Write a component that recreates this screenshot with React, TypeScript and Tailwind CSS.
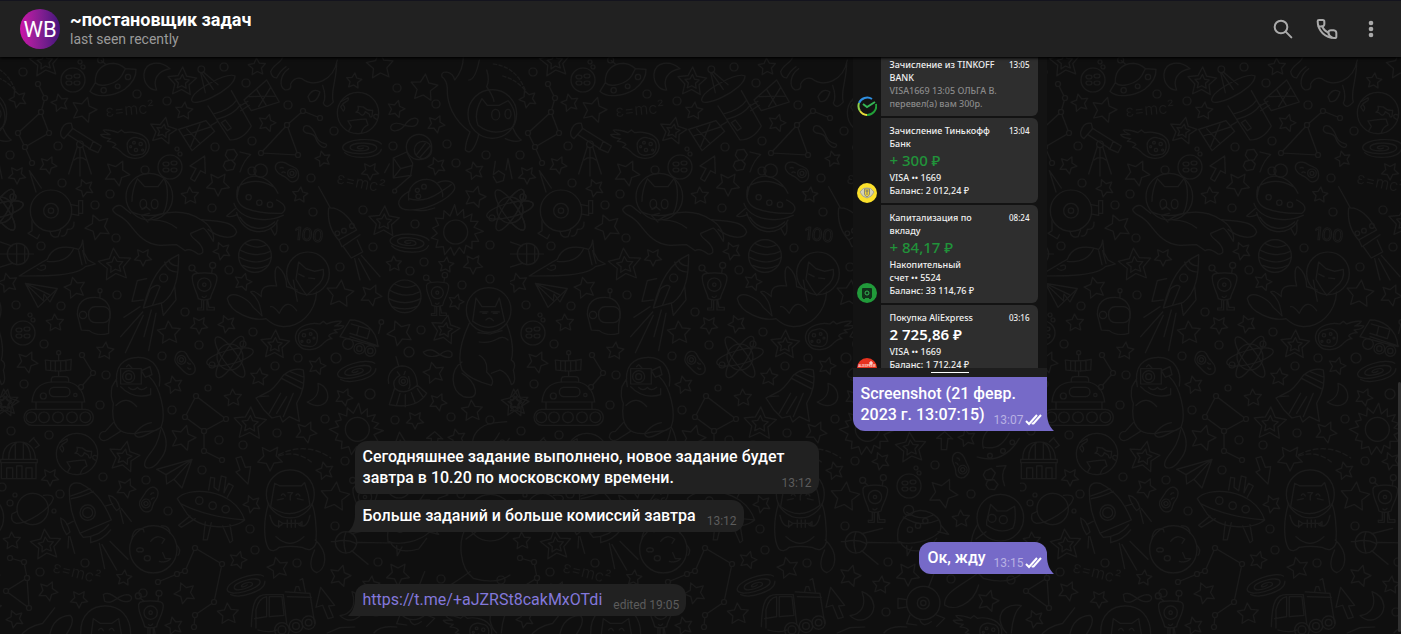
import type { ReactNode } from 'react';

type Point = [number, number, number];

// x, y, radius
const stars: Point[] = [
  [18, 99, 9], [60, 103, 9], [257, 67, 9], [184, 111, 9], [267, 123, 9], [48, 165, 9], [17, 175, 9], [85, 188, 9],
  [323, 159, 8], [190, 196, 9], [300, 195, 8], [84, 110, 13], [117, 173, 13], [218, 184, 12], [98, 227, 13],
  [75, 288, 11], [169, 333, 12], [340, 294, 14], [183, 438, 13], [306, 432, 11], [270, 458, 13], [185, 593, 11],
  [278, 568, 11], [228, 614, 11], [335, 497, 15], [340, 576, 11], [126, 488, 10], [143, 257, 9], [222, 251, 9],
  [8, 283, 10], [55, 323, 9], [105, 351, 9], [243, 282, 9], [27, 362, 11], [199, 325, 9], [227, 324, 9],
  [174, 385, 9], [233, 398, 9], [259, 377, 9], [317, 366, 9], [344, 397, 9], [50, 477, 9], [252, 504, 9],
  [325, 471, 9], [12, 541, 9], [124, 578, 8], [238, 560, 9], [48, 591, 10], [79, 599, 9], [15, 619, 9],
  [174, 626, 9], [380, 66, 14], [424, 88, 14], [475, 197, 11], [371, 295, 11], [473, 264, 10], [400, 333, 13],
  [434, 373, 11], [472, 411, 11], [354, 81, 8], [396, 109, 9], [436, 124, 9], [370, 171, 9], [437, 166, 9],
  [475, 171, 9], [394, 264, 8], [446, 265, 8], [456, 302, 8], [438, 402, 9], [415, 420, 9], [371, 461, 9],
  [457, 438, 9], [451, 519, 9], [371, 585, 9], [478, 601, 11], [433, 493, 15], [398, 574, 12],
];

const doubleStars: Point[] = [
  [45, 62, 16], [182, 82, 15], [163, 131, 14], [115, 265, 17], [275, 345, 15], [5, 403, 14], [515, 403, 14],
  [250, 424, 17], [124, 457, 16], [46, 545, 16], [384, 222, 16], [445, 330, 15], [401, 448, 16],
];

const dots: Point[] = [
  [23, 72, 4], [137, 94, 4], [167, 101, 4], [224, 67, 4], [246, 83, 4], [58, 146, 4], [10, 155, 4], [215, 147, 4],
  [288, 105, 4], [334, 131, 4], [252, 171, 4], [252, 141, 4], [145, 170, 4], [311, 178, 4], [62, 183, 4],
  [110, 194, 4], [95, 205, 4], [116, 238, 4], [41, 246, 4], [212, 208, 4], [313, 212, 4], [284, 248, 4],
  [340, 267, 4], [229, 270, 4], [117, 295, 4], [16, 305, 4], [61, 306, 4], [185, 312, 4], [44, 344, 4],
  [199, 345, 4], [253, 332, 4], [162, 356, 4], [298, 358, 4], [336, 358, 5], [275, 366, 4], [106, 375, 4],
  [24, 384, 4], [208, 388, 3], [100, 405, 4], [172, 410, 4], [11, 431, 4], [49, 435, 4], [277, 433, 4],
  [219, 440, 4], [243, 445, 4], [325, 419, 4], [345, 461, 4], [103, 477, 4], [146, 480, 4], [202, 470, 4],
  [2, 487, 4], [60, 494, 4], [10, 503, 3], [15, 495, 2], [54, 511, 2], [168, 511, 4], [250, 529, 4],
  [335, 526, 4], [255, 550, 4], [297, 563, 4], [85, 563, 4], [40, 572, 4], [143, 593, 4], [397, 88, 4],
  [436, 104, 4], [393, 146, 4], [447, 144, 4], [456, 163, 4], [486, 155, 4], [363, 210, 4], [415, 224, 4],
  [373, 247, 4], [424, 262, 4], [410, 271, 4], [462, 285, 4], [490, 245, 4], [490, 279, 4], [421, 330, 4],
  [409, 352, 5], [370, 394, 5], [395, 420, 4], [451, 417, 4], [490, 420, 4], [425, 465, 4], [461, 494, 4],
  [378, 562, 4], [441, 579, 4], [501, 580, 4], [376, 612, 4],
];

// joints of each constellation
const constellations: [number, number][][] = [
  [[38, 84], [45, 98], [41, 112], [49, 133], [25, 147], [18, 133], [41, 112]],
  [[25, 147], [32, 163]],
  [[320, 118], [303, 111], [287, 125], [261, 153], [298, 155], [287, 125]],
  [[82, 355], [93, 373], [81, 387]],
  [[222, 460], [204, 451], [204, 431], [185, 417], [196, 396], [226, 419], [204, 431]],
  [[158, 582], [177, 574], [185, 571], [195, 548], [222, 564], [214, 602], [195, 615], [194, 627]],
  [[10, 558], [24, 562], [27, 578], [6, 591], [29, 608], [27, 578]],
];

function starPath([cx, cy, r]: Point, turn: number) {
  const points = Array.from({ length: 10 }, (_, i) => {
    const radius = i % 2 ? r * 0.5 : r;
    const angle = turn + (i * Math.PI) / 5;
    return `${(cx + radius * Math.sin(angle)).toFixed(1)} ${(cy - radius * Math.cos(angle)).toFixed(1)}`;
  });
  return `M${points.join('L')}Z`;
}

function Atom({ x, y }: { x: number; y: number }) {
  return (
    <g transform={`translate(${x} ${y})`}>
      <circle r="13" />
      <ellipse rx="24" ry="7" transform="rotate(-15)" />
      <ellipse rx="24" ry="7" transform="rotate(55)" />
      <ellipse rx="24" ry="7" transform="rotate(122)" />
      <circle cx="-18" cy="8" r="3" />
      <circle cx="13" cy="-13" r="3" />
    </g>
  );
}

function Comet({ transform }: { transform: string }) {
  return (
    <g transform={transform}>
      <path d="M100 10C90 -8 60 -20 30 -14L20 -22 10 -14C-5 -20 -20 -24 -34 -22 -30 -14 -22 -12 -14 -8 -26 -8 -34 -10 -42 -8 -34 4 -22 2 -12 4L-22 12C-8 12 0 16 4 22L-6 30C10 30 14 40 26 50 44 66 76 68 92 52 104 40 106 24 100 10Z" />
      <path d="M38 30C34 8 54 -4 70 2L84 6C100 16 96 42 84 50L60 54C46 54 38 44 38 30Z" />
      <circle cx="58" cy="16" r="4" /><circle cx="78" cy="20" r="5" /><circle cx="64" cy="38" r="5" /><circle cx="48" cy="28" r="3" /><circle cx="84" cy="38" r="3" />
    </g>
  );
}

function Alien({ transform }: { transform: string }) {
  return (
    <g transform={transform}>
      <path d="M-36 -24Q-34 -32 -26 -33Q0 -38 26 -33Q36 -32 38 -22C38 4 22 20 18 42Q0 50 -18 42C-22 20 -38 2 -36 -24Z" />
      <circle r="20" /><circle r="5" />
      <path d="M-20 -34L-32 -44M22 -34L24 -50M-6 36Q0 42 6 34M-8 46V70H-20V76H-2V48M10 46L14 68H30V76H8V48" />
      <circle cx="-37" cy="-50" r="9" /><circle cx="25" cy="-58" r="9" />
    </g>
  );
}

function Galaxy({ transform }: { transform: string }) {
  return (
    <path
      transform={transform}
      d="M58 -12C40 -34 -54 -28 -58 -2C-60 22 42 24 44 0C44 -18 -34 -20 -36 -2C-36 12 22 12 20 0C18 -10 -16 -8 -14 0Q-6 5 4 0M-52 14C-30 34 50 34 58 4"
    />
  );
}

function MoonDisc({ x, y }: { x: number; y: number }) {
  return (
    <g transform={`translate(${x} ${y})`}>
      <circle r="12" />
      <ellipse cx="-4" cy="-3" rx="3" ry="2" /><ellipse cx="4" cy="-4" rx="3" ry="2" />
      <ellipse cx="-4" cy="3" rx="3" ry="2" /><ellipse cx="4" cy="3" rx="3" ry="2" />
      <circle cx="10" cy="-13" r="2" /><circle cx="7" cy="-18" r="2" />
    </g>
  );
}

function Earth({ x, y }: { x: number; y: number }) {
  return (
    <g transform={`translate(${x} ${y}) scale(.3333)`} strokeWidth="3.6">
      <circle r="62" />
      <path d="M-52 -34L-30 -46Q-26 -38 -36 -34T-52 -18L-44 -6Q-36 -14 -44 -24M-6 -2Q4 -8 0 -20L16 -18Q28 -6 44 -8L42 10Q36 16 34 4L22 -4Q16 12 8 4T-6 -2ZM-30 24L0 20 24 18 30 36Q14 42 10 60M-30 24L-20 40-28 54M60 6Q44 0 48 14L58 20" />
    </g>
  );
}

function Bean({ transform }: { transform: string }) {
  return (
    <g transform={transform}>
      <path d="M-34 -22C-26 -36 -6 -28 4 -22C18 -14 34 -14 34 8C34 28 16 34 6 26C0 20 -4 14 -16 10C-30 4 -40 -10 -34 -22Z" />
      <circle cx="14" cy="4" r="13" /><circle cx="14" cy="4" r="6" />
      <path d="M-22 -12q6 -4 10 0M-16 2q4 -4 10 0" />
    </g>
  );
}

function Formula({ transform }: { transform: string }) {
  return (
    <text transform={transform} className="text-base [font-family:Inter,sans-serif]" fontWeight="300" stroke="none" fill="#1b1b1b">
      ε=mc²
    </text>
  );
}

// Space doodles, grouped by area. Most groups are drawn on a grid of a third of a pixel.
function Doodles() {
  return (
    <g id="doodles" fill="none" stroke="#1b1b1b" strokeWidth="1.2" strokeLinecap="round" strokeLinejoin="round">
      {stars.map((s, i) => (
        <path key={i} d={starPath(s, (i % 7) * 0.17 - 0.4)} />
      ))}
      {doubleStars.map((s, i) => (
        <path key={i} d={starPath(s, (i % 3) * 0.15 - 0.1) + starPath([s[0], s[1], s[2] / 2], (i % 3) * 0.15 - 0.1)} />
      ))}
      {dots.map(([cx, cy, r]) => (
        <circle key={`${cx}-${cy}`} cx={cx} cy={cy} r={r} />
      ))}
      {constellations.map((line, i) => (
        <g key={i}>
          <path d={`M${line.map((p) => p.join(' ')).join('L')}`} />
          {line.map(([cx, cy], j) => (
            <circle key={j} cx={cx} cy={cy} r="2.5" fill="#0f0f0f" />
          ))}
        </g>
      ))}
      <MoonDisc x={73} y={80} />
      <MoonDisc x={170} y={167} />
      <MoonDisc x={23} y={333} />
      <MoonDisc x={399} y={486} />
      <Atom x={0} y={210} />
      <Atom x={510} y={210} />
      <Atom x={230} y={357} />
      <Earth x={358} y={113} />
      <Earth x={-152} y={113} />
      <Earth x={77} y={454} />
      <Formula transform="translate(106 117) rotate(-5)" />
      <Formula transform="translate(336 183) rotate(12)" />
      <Formula transform="translate(52 572) rotate(14)" />
      <g strokeWidth="3.6">
        <g transform="scale(.3333)">
          {/* saucer, crescent and dish */}
          <path d="M286 248C284 210 310 190 340 190Q362 192 376 206L408 208Q410 240 374 268C340 290 290 294 270 274L286 248C300 264 350 254 366 226L376 206M316 192L304 182" />
          <circle cx="302" cy="180" r="9" /><circle cx="311" cy="271" r="8" /><circle cx="353" cy="259" r="7" /><circle cx="384" cy="231" r="8" />
          <path d="M510 206C480 180 436 184 432 222C430 250 450 272 470 270C458 240 470 214 510 206Z" />
          <path d="M575 298C570 330 706 270 705 228C680 216 580 270 575 298ZM602 218L616 278M610 216L654 254M606 220L640 268M624 318L690 420Q730 420 754 378L694 272M640 342Q690 330 710 300M650 358Q700 346 722 314M664 368L676 360 694 384 682 392ZM716 320L744 304M722 332L748 316M732 300L800 240 838 306 754 332ZM748 290L828 288M770 268L800 318M776 320L812 262M654 364L634 376M536 388L618 362 644 394 576 452ZM550 408L634 380M560 386L600 430M600 372L572 440" />
          <circle cx="604" cy="208" r="10" />
          {/* cat hanging from the top */}
          <path d="M850 160C850 190 820 190 812 216Q816 234 830 234Q842 210 858 200M866 206C840 224 836 260 856 270Q876 270 872 252Q884 230 906 236C940 262 1000 246 1012 180M924 290Q938 262 960 276Q950 310 930 304ZM1010 190C1010 240 990 280 1000 306Q980 330 970 310Q980 290 968 256" />
          {/* telescope */}
          <path d="M182 396Q190 366 214 370L218 386 192 416Q180 410 182 396ZM216 384L280 424 270 446 204 404M280 424L304 438 294 458 266 446M232 440L206 522M240 444V528M248 440L274 522M222 480Q240 466 258 480" />
          <circle cx="240" cy="433" r="10" />
          {/* infinity, arrow and cells */}
          <path d="M912 380C930 366 946 400 950 412C960 436 980 426 980 436C976 450 956 440 946 412C936 392 916 408 910 390ZM570 498L614 468 616 520 602 512 584 544 572 536 588 506ZM682 450L702 448 712 464 702 480 686 480 676 466ZM676 484L694 480 706 492 700 508 680 512 670 498ZM720 456L752 464Q732 480 720 516" />
          <Comet transform="translate(344 412)" />
          <Bean transform="translate(862 516)" />
        </g>

        <g transform="translate(0 200) scale(.3333)">
          {/* round station */}
          <circle cx="153" cy="32" r="62" /><circle cx="153" cy="32" r="22" /><circle cx="153" cy="32" r="8" />
          <path d="M88 -88L124 -36M88 -88L108 -24M214 14L236 18V46L214 42M236 2H248V40H236ZM96 62V92L84 100 112 116 118 104M150 94Q154 116 174 110L182 90M184 108Q200 110 202 88M202 88Q224 90 222 66" />
          {/* flying cat */}
          <circle cx="448" cy="-10" r="70" />
          <path d="M396 4Q396 -30 412 -64L434 -40H474L492 -64C506 -40 506 10 490 40Q440 56 396 36M448 40L424 46 444 66M426 28L438 20 450 30M392 40L368 20Q352 10 338 28C340 44 360 44 376 60C400 80 420 132 480 136L530 134 556 152Q568 142 594 162Q612 164 608 148C600 120 570 116 572 100L610 84Q620 90 640 124C644 110 636 76 600 58C560 30 520 36 502 38Q470 44 446 60M600 58C650 66 700 60 710 96C700 124 650 110 624 88M460 60Q500 60 530 84" />
          <ellipse cx="430" cy="12" rx="10" ry="14" /><ellipse cx="464" cy="12" rx="10" ry="14" />
          {/* beanie saucer */}
          <path d="M702 10C720 60 800 70 850 46M714 -40Q700 10 740 26T846 40Q870 20 830 0M712 -10C716 -90 800 -90 834 -20M720 -44Q770 -70 820 -40M710 38C730 110 810 110 834 60M720 52C744 90 790 96 824 66M706 26L680 48Q690 54 712 44M812 84L824 106Q834 100 830 66" />
          <circle cx="782" cy="-88" r="20" /><circle cx="746" cy="-8" r="8" /><circle cx="778" cy="8" r="8" /><circle cx="810" cy="14" r="8" />
          {/* probe */}
          <circle cx="54" cy="162" r="32" />
          <path d="M50 130V194M74 140V186M-68 162H100M-46 110L36 138M-46 216L36 190" />
          {/* shuttle lying */}
          <path d="M58 228Q120 190 142 178C160 130 210 140 236 148Q246 138 248 120L252 158L264 180 286 192 256 200C230 228 140 228 58 228ZM142 184Q200 190 220 148M236 152L246 194M248 152L258 190M122 198Q140 190 136 206Q124 216 112 206" />
          {/* rocket */}
          <path d="M536 164C480 190 450 240 430 324L488 308C530 280 536 220 536 164ZM494 186Q500 214 530 216M506 180Q510 196 534 198M440 236L412 242 396 304 430 300M524 258L528 300 490 346 484 310M430 324L450 268Q470 250 480 260L458 314M420 320L372 352M428 336L362 410M430 346L376 458M454 330L432 410M468 340L446 452" />
          <circle cx="491" cy="234" r="12" />
          <Alien transform="translate(613 254)" />
          {/* striped planet */}
          <circle cx="765" cy="168" r="49" />
          <path d="M734 130Q770 150 800 134M720 150Q770 176 812 154M718 172Q770 200 814 172M728 196Q770 214 804 196" />
          {/* sleeping cat in a helmet */}
          <circle cx="924" cy="220" r="64" />
          <path d="M888 238L896 186 918 206 944 214 970 208Q976 240 946 262L920 286Q900 260 888 238ZM880 240L892 304M950 276C946 340 900 380 850 380Q820 378 798 356C760 364 690 340 682 296C690 270 740 290 760 322Q780 340 786 348C780 320 780 300 752 276Q760 268 784 290Q780 250 830 258C824 240 822 200 834 200Q860 220 860 260L892 270M812 320Q820 316 838 340Q860 290 890 332M896 222L912 230M926 234L944 236" />
          <text x="884" y="122" fontSize="52" className="[font-family:Inter,sans-serif]" strokeWidth="3" transform="rotate(6 920 100)">100</text>
          {/* capsule rocket */}
          <path d="M956 -40L990 22M986 24Q1030 20 1070 90L1016 120Q980 80 986 24ZM1016 118L1026 140 1080 104M1030 140L1054 174 1088 156 1072 120M1064 176L1080 240M1076 176L1110 240M1084 166L1140 230" />
          <circle cx="1012" cy="100" r="7" /><circle cx="1032" cy="92" r="7" /><circle cx="1056" cy="78" r="7" />
          {/* paper planes */}
          <path d="M76 250L172 266 114 322ZM76 250L130 302 132 282 150 306 172 266M76 250L148 284M470 808L576 778 546 864 522 838 500 852 498 824ZM498 824L576 778 522 838" />
          {/* helmet */}
          <path d="M232 344C232 300 260 292 284 292C320 292 334 320 330 352L326 376V400Q290 410 268 392L244 390ZM300 292V278" />
          <rect x="266" y="320" width="64" height="48" rx="20" /><circle cx="300" cy="272" r="6" /><circle cx="249" cy="345" r="11" />
          <Comet transform="matrix(-1 0 0 1 990 386)" />
          <Bean transform="translate(556 488) rotate(200)" />
          {/* rover on tracks */}
          <path d="M96 606C100 560 130 546 160 546H196C230 546 250 570 254 606ZM108 606V628M246 606V628M154 546V536Q156 530 164 530H196Q206 530 206 540V546M176 530V514M136 480Q176 486 214 478L212 510Q176 516 138 510ZM152 482V512M166 484V514M182 484V514M198 482V512M176 480V464" />
          <rect x="72" y="628" width="208" height="48" rx="24" /><rect x="148" y="562" width="62" height="28" rx="14" />
          <circle cx="94" cy="652" r="16" /><circle cx="132" cy="652" r="16" /><circle cx="174" cy="652" r="16" /><circle cx="216" cy="652" r="16" /><circle cx="256" cy="652" r="16" />
          <circle cx="176" cy="458" r="6" /><circle cx="130" cy="588" r="9" /><circle cx="226" cy="585" r="5" />
          {/* cat taking a photo */}
          <path d="M352 560C340 500 370 472 416 472C460 472 486 510 478 558M362 506H424V552H362ZM424 512L450 500 456 524 436 532ZM380 500L386 494 396 504M362 560Q400 600 452 584V566M386 562Q400 576 412 562Q424 576 440 562M448 530C480 560 500 640 484 680C470 700 440 690 410 700C360 706 330 680 340 610Q330 590 336 560L350 536M348 616Q380 584 410 620M340 668L316 694Q298 694 298 712Q306 728 324 718L362 694M404 702Q410 720 440 704L484 682Q516 740 478 782C460 810 430 810 434 790C440 760 470 756 482 690M404 700Q430 670 454 668" />
          <circle cx="386" cy="530" r="18" /><circle cx="386" cy="530" r="9" />
          {/* space shuttle */}
          <path d="M850 526Q880 500 910 510C916 540 914 570 890 610L898 664 868 650 848 666 840 648 816 654 792 630 768 594 800 578Q820 570 850 526ZM846 536L904 566M856 524L910 550M868 514L912 532M842 580L808 640M880 580L850 650M860 590L830 640M776 590L806 588" />
          <path d="M954 550C960 584 940 600 922 606C960 630 990 610 982 578Q976 556 954 550Z" />
          {/* observatory */}
          <path d="M8 778C8 740 30 726 60 726C90 726 106 750 106 778M2 778H112V788H2ZM4 790V836H108V790M26 776Q26 740 50 728M46 776V728M70 776V728M92 776Q92 740 70 728M20 834V804H38V834M50 834V798H66V834M78 834V804H96V834M88 726L100 714 118 736 106 744M94 720L102 712" />
          {/* ringed planet */}
          <circle cx="98" cy="927" r="47" />
          <path d="M130 886Q160 882 160 896C150 930 80 970 50 970Q30 966 36 942L52 934" />
          {/* big rocket */}
          <path d="M208 870Q210 844 240 850C280 870 310 900 334 960L240 1000C220 960 206 920 208 870ZM212 888Q240 880 270 866M214 896Q250 890 280 874M240 1000L250 1012Q300 1010 326 974M272 1012V1028Q310 1020 332 990M316 918L338 912M220 964L200 974M326 886Q350 890 360 924L350 932Q334 914 326 886ZM182 954Q200 960 210 996L200 1004Q184 980 182 954ZM298 1030L314 1106M306 1034L350 1110M330 1024L384 1078M206 1010L204 1044M210 1010L224 1060M360 930L370 970M364 926L394 964" />
          <circle cx="263" cy="938" r="23" /><circle cx="263" cy="938" r="15" />
          <Bean transform="translate(448 900) rotate(150) scale(1 -1)" />
          {/* moon with craters */}
          <circle cx="460" cy="1048" r="71" />
          <ellipse cx="420" cy="1050" rx="10" ry="6" /><ellipse cx="442" cy="1075" rx="9" ry="8" />
          <path d="M396 1016Q400 980 430 988L432 996M484 978Q508 976 510 1000M530 1036Q546 1050 534 1066M452 1024Q470 1000 494 1018L486 1030M488 1058L496 1076H512Q500 1090 478 1084" />
          {/* saucer with legs */}
          <path d="M532 896C560 860 700 860 734 960C700 990 600 990 560 940ZM544 912Q620 950 732 960M626 870L632 832 644 834 642 862 656 872 664 828 678 832 672 878 686 850 700 858 682 892M570 948L536 976 544 982 586 956M616 966L610 1020H622L634 968M668 978L690 1028 698 1022 690 974" />
          <circle cx="598" cy="902" r="11" /><circle cx="638" cy="917" r="11" /><circle cx="677" cy="928" r="11" />
          {/* arrow and falling star trail */}
          <path d="M708 774L724 770 736 802 752 800 744 852 708 816 720 810Z" />
          <path d="M836 764Q920 724 992 774M836 768Q890 750 934 786" strokeDasharray="14 9" />
          {/* cat holding a fish */}
          <circle cx="871" cy="882" r="72" />
          <path d="M812 920L824 850 840 858H904L914 848Q926 880 930 916Q870 964 812 920ZM806 910C790 960 790 1020 806 1046Q820 1060 838 1042Q870 1036 906 1042Q936 1060 948 1030C952 980 944 930 936 912M810 946Q820 990 846 974M930 946Q920 990 896 974M836 962V982L848 970ZM848 970H900M862 960V982M874 960V982M886 960V982M900 970L906 964V978ZM828 1010Q870 1050 912 1010M946 1020C990 1060 976 1110 950 1118C926 1110 930 1080 944 1050M844 886Q850 876 856 888M888 886Q894 876 900 888M864 878H878L871 886V900M832 900L850 896M892 896L910 900" />
          <Galaxy transform="translate(738 1156) rotate(-16)" />
          {/* truck */}
          <path d="M754 1280C756 1200 770 1184 800 1184H850L860 1270M768 1284V1230Q776 1194 800 1190V1250L764 1256M808 1190H846L852 1246 808 1250ZM856 1176L930 1180 944 1270M862 1190L934 1192M884 1176L888 1160H896L900 1172M900 1140L908 1136 916 1176M774 1290Q810 1300 830 1290" />
          <circle cx="846" cy="1290" r="22" /><circle cx="888" cy="1278" r="20" /><circle cx="926" cy="1268" r="20" /><circle cx="846" cy="1290" r="12" /><circle cx="888" cy="1278" r="10" /><circle cx="926" cy="1268" r="10" />
          <path d="M962 1162L1004 1216 986 1218 1000 1252 984 1256 968 1216 948 1222ZM310 1184C330 1170 350 1200 370 1204C400 1210 402 1184 380 1184C350 1186 340 1216 314 1204Z" />
          {/* helmet cat at the bottom */}
          <path d="M242 1302C240 1240 280 1218 316 1218C360 1218 392 1250 392 1302M274 1302L280 1256 300 1270H336L356 1256 364 1302M296 1290Q304 1280 310 1292M328 1290Q336 1280 342 1292" />
          <Alien transform="translate(452 1238)" />
          <path d="M164 1224L128 1270Q80 1280 60 1310M150 1302Q160 1250 210 1246Q228 1260 200 1302" />
        </g>

        <g transform="translate(350 60) scale(.3333)">
          {/* cat upside down */}
          <circle cx="427" cy="162" r="73" />
          <path d="M384 196Q370 160 396 116L412 136H448L474 122C500 150 500 190 484 204Q430 232 384 196ZM360 216C310 180 290 130 292 84Q290 60 276 50Q272 36 290 36Q310 40 314 60Q340 30 340 -10M356 60Q376 60 388 0M410 30Q420 60 410 80Q430 110 432 124M360 216Q346 250 346 270Q360 284 372 262Q384 240 386 222M466 236Q500 250 514 240Q500 230 490 206" />
          <ellipse cx="437" cy="164" rx="12" ry="16" /><ellipse cx="474" cy="162" rx="9" ry="14" />
          <path d="M430 12Q500 20 528 96M458 48Q500 60 524 90" strokeDasharray="10 7" />
          <path d="M122 200C130 184 150 190 164 196C180 170 206 170 204 184C200 204 180 200 164 196C150 214 120 220 122 200ZM220 876C250 860 260 880 270 884C300 900 308 890 306 880C300 866 280 874 270 884C250 894 226 890 220 876Z" />
          <Galaxy transform="translate(36 264)" />
          <Galaxy transform="translate(178 548) rotate(5)" />
          <Galaxy transform="translate(20 934) rotate(-12)" />
          {/* lander */}
          <circle cx="207" cy="261" r="38" /><circle cx="219" cy="270" r="26" />
          <path d="M200 284L226 250M210 292L240 258M170 276L130 294V354L182 346 188 310 170 276M130 294L152 326 130 354M152 326L188 316M184 346L136 388M118 312L104 338" />
          <circle cx="134" cy="393" r="6" />
          {/* planet with ring */}
          <path d="M176 420C170 380 200 358 230 358C260 358 280 390 278 410M180 392C130 420 140 450 180 450C250 450 320 400 314 380C310 360 280 360 264 368M176 416Q220 430 268 398T300 376M190 450Q220 456 254 444" />
          <circle cx="222" cy="380" r="7" /><circle cx="202" cy="391" r="6" /><circle cx="205" cy="409" r="7" />
          <path d="M436 304L430 344 446 332 464 344 460 362 440 368 430 350M474 296L468 330M474 296L486 356" />
          {/* sun */}
          <circle cx="317" cy="516" r="36" />
          <path d="M314 434L322 466 340 448 342 474 366 462 362 484 384 484 372 502 400 514 374 522 386 544 366 544 366 566 348 556 342 580 328 562 312 586 302 562 284 584 280 560 258 562 264 540 244 534 262 520 248 504 266 496 256 474 280 476 282 452 300 468Z" />
          <circle cx="164" cy="709" r="49" />
          <path d="M134 672Q170 690 196 676M118 690Q166 718 208 696M116 716Q166 740 212 716M126 740Q166 754 200 740" />
          <Alien transform="translate(262 698) scale(.9)" />
          {/* grumpy cat */}
          <circle cx="416" cy="750" r="67" />
          <path d="M368 784L378 714 396 740H436L448 714 464 784Q416 820 368 784ZM358 790C330 850 324 900 336 930Q360 960 424 976Q436 960 410 936Q414 900 388 886M470 792C490 840 490 880 484 900Q500 910 490 930Q500 970 484 974Q476 940 450 930L424 940M336 906C300 930 300 990 340 1010Q380 1020 376 990Q370 960 336 940M384 818L420 822 456 812M388 846Q420 850 440 838T474 840M390 756H414M424 756H448M398 760h12M430 760h12M408 780Q418 768 430 782" />
          {/* moon rover */}
          <path d="M0 780C30 780 80 800 84 860L-30 830ZM0 830L86 858M4 792L60 808 52 836 0 820M26 800L20 826M86 820L92 794" />
          <circle cx="94" cy="786" r="7" /><circle cx="28" cy="866" r="16" /><circle cx="61" cy="873" r="16" /><circle cx="28" cy="866" r="8" /><circle cx="61" cy="873" r="8" /><circle cx="-6" cy="852" r="16" />
          {/* little alien in a capsule */}
          <path d="M116 970C110 940 130 920 156 918C190 918 200 950 202 974M146 918L138 890M134 984Q160 1010 202 976L230 1000Q200 1050 118 1034L134 984M150 1000L140 1034M166 1004V1040M184 998L196 1030M202 986L220 1012M134 984Q124 960 150 946L142 936M162 944L166 934M176 950Q184 980 176 986" />
          <circle cx="160" cy="964" r="13" /><circle cx="160" cy="964" r="6" />
          {/* sun at the bottom */}
          <circle cx="22" cy="1108" r="36" />
          <path d="M-62 1108L-34 1100-44 1084-26 1080-34 1060-10 1068-8 1044 10 1060 26 1030 34 1062 52 1046 52 1070 76 1064 66 1084 86 1090 72 1104 100 1112 72 1124 84 1144 60 1144 60 1166 42 1156 34 1180 20 1160 4 1184-4 1160-26 1166-24 1144-44 1140-36 1122Z" />
        </g>

        <g transform="translate(180 425) scale(.3333)">
          <path d="M764 20L788 42 774 40 770 74H754V40L740 40Z" />
          <path d="M880 70C870 30 900 0 940 -6L980 -10M862 96Q940 120 988 40M880 66Q930 80 958 24" />
          <circle cx="900" cy="92" r="7" /><circle cx="939" cy="78" r="7" /><circle cx="967" cy="52" r="7" />
          <Bean transform="translate(810 122) rotate(40)" />
          <path d="M886 138L904 130 916 144 906 164 888 164 880 150ZM892 168L912 164 924 178 914 194 896 192 888 180ZM920 124L948 122Q930 150 944 182" />
          <Alien transform="translate(555 216)" />
          {/* probe and beanie saucer */}
          <circle cx="498" cy="352" r="32" />
          <path d="M466 350Q498 340 530 356M498 320Q486 350 498 384M454 350H466M516 326L578 310M530 352L636 354M516 378L564 418M624 350C616 290 650 262 690 256C740 260 760 290 750 320C720 350 660 362 624 350ZM650 262Q690 290 730 270M640 276Q690 310 744 286M630 350Q650 390 716 372L740 340M752 300L776 328 744 320M650 362L652 392 666 366" />
          <circle cx="656" cy="256" r="15" /><circle cx="660" cy="314" r="8" /><circle cx="684" cy="302" r="8" /><circle cx="706" cy="288" r="8" />
          {/* cat with a long tail */}
          <circle cx="931" cy="278" r="70" />
          <path d="M890 290L902 238 922 258H950L974 244Q980 290 968 310Q930 330 890 300ZM888 320L858 342M862 300C830 350 840 430 880 460Q950 480 990 450M870 440C820 480 760 500 764 540C790 560 850 540 866 480" />
          <circle cx="906" cy="280" r="12" /><circle cx="940" cy="284" r="12" />
          {/* porthole station */}
          <circle cx="700" cy="534" r="50" /><circle cx="700" cy="534" r="18" /><circle cx="700" cy="534" r="8" />
          <path d="M716 486L734 440M650 524L624 520V550L650 546M660 570L650 596 680 600M740 570L764 580 740 604M690 586Q700 610 724 590" />
          <path d="M516 500C530 540 516 566 480 572C510 600 550 580 552 544Q548 510 516 500ZM994 542C960 536 930 550 930 584Q934 610 950 624M994 542Q970 560 964 624" />
          <Comet transform="translate(832 594)" />
          <path d="M442 624L480 608 524 606M582 624Q600 600 650 606" />
        </g>
      </g>
    </g>
  );
}

function Wallpaper() {
  return (
    <svg className="absolute inset-0 h-full w-full" aria-hidden="true">
      <defs>
        <pattern id="space" width="510" height="1127" patternUnits="userSpaceOnUse" patternTransform="translate(0 -57)">
          <Doodles />
          <use href="#doodles" x="-510" />
        </pattern>
      </defs>
      <rect width="100%" height="100%" fill="url(#space)" />
    </svg>
  );
}

function Tail({ side }: { side: 'left' | 'right' }) {
  return side === 'right' ? (
    <svg className="absolute -right-[7px] bottom-0" width="8" height="18" viewBox="0 0 8 18" fill="#766ac8" aria-hidden="true">
      <path d="M0 0H1C1 9 4 14 8 18H0Z" />
    </svg>
  ) : (
    <svg className="absolute -left-[7px] bottom-0" width="8" height="18" viewBox="0 0 8 18" fill="#212121" aria-hidden="true">
      <path d="M8 0H7C7 9 4 14 0 18H8Z" />
    </svg>
  );
}

function Checks() {
  return (
    <svg width="19" height="16" viewBox="0 0 19 16" fill="none" stroke="#fff" strokeWidth="2" aria-hidden="true">
      <path d="M2 9L5 12L13 3M9 12L17 3M8 11L9 12" />
    </svg>
  );
}

function Time({ children, sent }: { children: ReactNode; sent?: boolean }) {
  return (
    <span
      className={
        sent
          ? 'float-right mt-2 ml-2 flex text-xs leading-4 font-normal text-[#b8b1e3]'
          : 'float-right mt-2 ml-[11px] text-xs leading-4 font-normal text-[#5c5c5c]'
      }
    >
      {children}
      {sent && <Checks />}
    </span>
  );
}

function SberIcon() {
  return (
    <svg width="20" height="20" viewBox="0 0 20 20" fill="none" strokeWidth="2" aria-hidden="true">
      <path d="M15 3A9 9 0 0 0 2 7" stroke="#2f8fe0" />
      <path d="M2 7A9 9 0 0 0 3 15" stroke="#8fd04a" />
      <path d="M3 15A9 9 0 0 0 10 19" stroke="#e8dc3a" />
      <path d="M10 19A9 9 0 0 0 19 8" stroke="#21a038" />
      <path d="M6 8L10 11L18 6" stroke="#35b455" />
    </svg>
  );
}

function TinkoffIcon() {
  return (
    <svg width="20" height="20" viewBox="0 0 40 40" aria-hidden="true">
      <circle cx="20" cy="20" r="20" fill="#fbe02b" />
      <path d="M6 18Q12 8 20 10Q28 8 34 18Q30 28 20 30Q10 28 6 18Z" fill="#d4d2b8" stroke="#a8a68c" strokeWidth="2" />
      <path d="M15 12H25V22Q24 26 20 28Q16 26 15 22Z" fill="#efd53a" stroke="#8c8a70" strokeWidth="2" />
      <path d="M20 14V24M17 16H23" stroke="#777" strokeWidth="2" />
    </svg>
  );
}

function SafeIcon() {
  return (
    <svg width="20" height="20" viewBox="0 0 40 40" aria-hidden="true">
      <circle cx="20" cy="20" r="20" fill="#219a3a" />
      <path d="M12 10H28Q30 10 30 12V28Q30 30 28 30V32H24V30H16V32H12V30Q10 30 10 28V12Q10 10 12 10Z" fill="#12301a" />
      <circle cx="20" cy="20" r="4" fill="none" stroke="#35b455" strokeWidth="2" />
    </svg>
  );
}

function AliExpressIcon() {
  return (
    <svg width="20" height="20" viewBox="0 0 20 20" aria-hidden="true">
      <circle cx="10" cy="10" r="10" fill="#e8321f" />
      <path d="M14 3V7M12 5H16" stroke="#fff" />
      <text x="10" y="9" textAnchor="middle" fontSize="3" fontWeight="700" fill="#ffd9d2">ALIEXPRESS</text>
    </svg>
  );
}

interface Operation {
  icon: ReactNode;
  title: string;
  time: string;
  amount?: string;
  income?: boolean;
  lines: string[];
}

const operations: Operation[] = [
  { icon: <SberIcon />, title: 'Зачисление из TINKOFF BANK', time: '13:05', lines: ['VISA1669 13:05 ОЛЬГА В.', 'перевел(а) вам 300р.'] },
  { icon: <TinkoffIcon />, title: 'Зачисление Тинькофф Банк', time: '13:04', amount: '+ 300 ₽', income: true, lines: ['VISA •• 1669', 'Баланс: 2 012,24 ₽'] },
  { icon: <SafeIcon />, title: 'Капитализация по вкладу', time: '08:24', amount: '+ 84,17 ₽', income: true, lines: ['Накопительный', 'счет •• 5524', 'Баланс: 33 114,76 ₽'] },
];

const purchase: Operation = {
  icon: <AliExpressIcon />,
  title: 'Покупка AliExpress',
  time: '03:16',
  amount: '2 725,86 ₽',
  lines: ['VISA •• 1669', 'Баланс: 1 712,24 ₽'],
};

function OperationRow({ icon, title, time, amount, income, lines }: Operation) {
  return (
    <div className="flex items-end gap-1 pr-[9px] pl-1">
      <span className="w-5 shrink-0">{icon}</span>
      <div className="min-w-0 flex-1 rounded-r-md bg-[#2e2e2e] py-1.5 pr-2 pl-[9px] text-[9px] leading-[13px] font-medium text-[#f0f0f0]">
        <div className="flex justify-between">
          <p className="max-w-[110px]">{title}</p>
          <time className="text-[8px]">{time}</time>
        </div>
        {amount && (
          <p className={income ? 'text-[15px] leading-[21px] font-medium text-[#21933a]' : 'text-[15px] leading-[21px] font-semibold text-white'}>
            {amount}
          </p>
        )}
        {lines.map((line) => (
          <p key={line} className={amount ? 'whitespace-nowrap' : 'whitespace-nowrap text-[#8a8a8a]'}>
            {line}
          </p>
        ))}
      </div>
    </div>
  );
}

function ScreenshotMessage() {
  return (
    <article className="relative w-[194px] self-end">
      <div className="flex flex-col gap-0.5 bg-[#131313] [font-family:'Noto_Sans',sans-serif]">
        {operations.map((op) => (
          <OperationRow key={op.title} {...op} />
        ))}
        <div className="h-[63px] overflow-hidden">
          <div className="[&>div]:items-start [&>div>span]:pt-[53px]">
            <OperationRow {...purchase} />
          </div>
        </div>
      </div>
      <div className="flex h-[9px] items-center justify-center bg-[#1e1e1e]">
        <span className="h-px w-[38px] bg-white" />
      </div>
      <p className="flow-root rounded-bl-xl bg-[#766ac8] pt-1.5 pr-1 pb-[3px] pl-2 font-medium text-white">
        Screenshot (21 февр. 2023 г. 13:07:15)
        <Time sent>13:07</Time>
      </p>
      <Tail side="right" />
    </article>
  );
}

export default function App() {
  return (
    <div className="h-screen bg-white pr-1 [font-family:Roboto,sans-serif]">
      <div className="flex h-full flex-col overflow-hidden bg-[#0f0f0f]">
        <header className="relative z-10 flex h-[57px] shrink-0 items-center border-t border-[#14141e] bg-[#212121] pr-2 pl-5 shadow-sm shadow-black">
          <div className="flex size-10 items-center justify-center rounded-full bg-linear-to-r from-[#cc12a8] to-[#45137c] text-[22px] text-white">
            WB
          </div>
          <div className="ml-2.5 flex-1">
            <h1 className="text-lg leading-5 font-bold text-white">~постановщик задач</h1>
            <p className="text-sm leading-[18px] text-[#9a9a9a]">last seen recently</p>
          </div>
          <button type="button" aria-label="Search" className="flex h-11 w-11 items-center justify-center">
            <svg width="24" height="24" viewBox="0 0 72 72" fill="none" stroke="#aaa" strokeWidth="6" strokeLinecap="round">
              <circle cx="30" cy="30" r="19" />
              <path d="M44 44L61 61" />
            </svg>
          </button>
          <button type="button" aria-label="Call" className="flex h-11 w-11 items-center justify-center">
            <svg width="24" height="24" viewBox="0 0 72 72" fill="none" stroke="#aaa" strokeWidth="6" strokeLinejoin="round">
              <path d="M8 13Q8 9 12 9H23Q28 9 28 14V21Q28 27 22 28C25 37 32 43 40 47Q41 40 48 40H56Q64 41 64 48V59Q64 63 59 63C31 62 8 42 8 13Z" />
              <path d="M9 26Q14 30 22 28M40 47Q41 57 52 62" />
            </svg>
          </button>
          <button type="button" aria-label="More actions" className="flex h-11 w-11 items-center justify-center">
            <svg width="24" height="24" viewBox="0 0 72 72" fill="#aaa">
              <circle cx="36" cy="18" r="7" /><circle cx="36" cy="36" r="7" /><circle cx="36" cy="54" r="7" />
            </svg>
          </button>
        </header>

        <main className="relative flex min-h-0 flex-1 flex-col justify-end overflow-hidden">
          <Wallpaper />
          <div className="relative mx-auto flex w-full max-w-[692px] flex-col pb-[18px] text-base leading-[21px]">
            <ScreenshotMessage />

            <article className="mt-2.5 max-w-[464px] self-start">
              <p className="flow-root rounded-xl rounded-bl-md bg-[#212121] pt-[5px] pr-[7px] pb-[3px] pl-2 font-medium text-white">
                Сегодняшнее задание выполнено, новое задание будет завтра в 10.20 по московскому времени.
                <Time>13:12</Time>
              </p>
            </article>

            <article className="relative mt-1.5 self-start">
              <p className="flow-root rounded-xl rounded-tl-md rounded-bl-none bg-[#212121] pt-[5px] pr-[7px] pb-[3px] pl-2 font-medium text-white">
                Больше заданий и больше комиссий завтра
                <Time>13:12</Time>
              </p>
              <Tail side="left" />
            </article>

            <article className="relative mt-2.5 self-end">
              <p className="flow-root rounded-xl rounded-br-none bg-[#766ac8] pt-[5px] pr-1 pb-[3px] pl-2 font-medium text-white">
                Ок, жду
                <Time sent>13:15</Time>
              </p>
              <Tail side="right" />
            </article>

            <article className="relative mt-2.5 self-start">
              <p className="flow-root rounded-xl rounded-bl-none bg-[#212121] pt-[5px] pr-[7px] pb-[3px] pl-2">
                <a href="https://t.me/+aJZRSt8cakMxOTdi" className="text-[#8378db]">
                  https://t.me/+aJZRSt8cakMxOTdi
                </a>
                <Time>edited 19:05</Time>
              </p>
              <Tail side="left" />
            </article>
          </div>
          <div className="absolute right-0 bottom-0.5 h-[250px] w-[3px] rounded-full bg-[#303030]" />
        </main>
      </div>
    </div>
  );
}
